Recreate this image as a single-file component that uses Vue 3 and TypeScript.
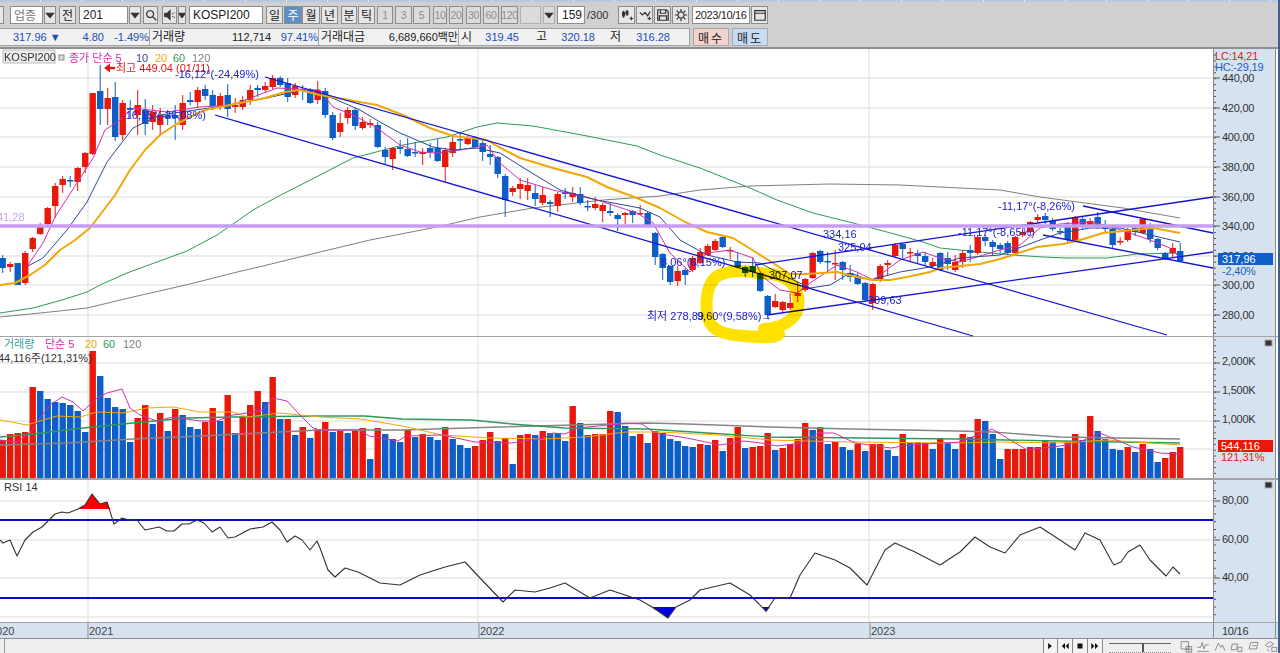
<script setup lang="ts">
type Item = { l: number; r: number; k: string; t?: string; d?: string; fill?: boolean };
const top: Item[] = [
  { l: -2, r: 4, k: 'btn' },
  { l: 10, r: 43, k: 'field muted', t: '업종' },
  { l: 44, r: 56, k: 'btn', d: 'M4 6h8l-4 5z', fill: true },
  { l: 59, r: 76, k: 'btn', t: '전' },
  { l: 79, r: 128, k: 'field', t: '201' },
  { l: 129, r: 141, k: 'btn', d: 'M4 6h8l-4 5z', fill: true },
  { l: 143, r: 158, k: 'btn', d: 'M7 3a4 4 0 1 0 .01 0M10 10l4 4' },
  { l: 162, r: 177, k: 'btn', d: 'M2 6h3l3-3v10l-3-3H2zM11 6v1M11 9v1M13 5v1M13 10v1', fill: true },
  { l: 178, r: 186, k: 'btn', d: 'M4 6h8l-4 5z', fill: true },
  { l: 189, r: 263, k: 'field', t: 'KOSPI200' },
  { l: 266, r: 283, k: 'btn', t: '일' },
  { l: 284, r: 302, k: 'btn on', t: '주' },
  { l: 302, r: 320, k: 'btn', t: '월' },
  { l: 321, r: 338, k: 'btn', t: '년' },
  { l: 341, r: 357, k: 'btn', t: '분' },
  { l: 358, r: 375, k: 'btn', t: '틱' },
  { l: 377, r: 393, k: 'btn dim', t: '1' },
  { l: 395, r: 412, k: 'btn dim', t: '3' },
  { l: 413, r: 430, k: 'btn dim', t: '5' },
  { l: 433, r: 447, k: 'btn dim', t: '10' },
  { l: 449, r: 463, k: 'btn dim', t: '20' },
  { l: 466, r: 481, k: 'btn dim', t: '30' },
  { l: 483, r: 499, k: 'btn dim', t: '60' },
  { l: 501, r: 518, k: 'btn dim', t: '120' },
  { l: 520, r: 541, k: 'btn blank' },
  { l: 543, r: 555, k: 'btn blank', d: 'M4 6h8l-4 5z', fill: true },
  { l: 557, r: 585, k: 'field end', t: '159' },
  { l: 587, r: 612, k: 'plain', t: '/300' },
  { l: 618, r: 635, k: 'btn', d: 'M4 3v8M3 5h2v4H3zM8 2v7M7 4h2v3H7zM11 12h4M13 10v4' },
  { l: 636, r: 653, k: 'btn', d: 'M2 5l3 3 3-3 3 4 3-5M11 12h4M13 10v4' },
  { l: 654, r: 671, k: 'btn', d: 'M2 2h10l2 2v10H2zM5 2v4h6V2M4 9h8v5H4z' },
  { l: 672, r: 689, k: 'btn', d: 'M8 4.5a3.5 3.5 0 1 0 .01 0M8 1v3M8 12v3M1 8h3M12 8h3M3 3l2 2M11 11l2 2M13 3l-2 2M5 11l-2 2' },
  { l: 692, r: 750, k: 'field tight', t: '2023/10/16' },
  { l: 751, r: 768, k: 'btn', d: 'M2 3h12v11H2zM2 6h12' },
];
const widthOf = (it: Item, i: number) => ({
  width: it.r - it.l + 'px',
  marginLeft: (i ? it.l - top[i - 1].r : it.l) + 'px',
});

type Cell = { w: number; t: string; c: string };
const quote: Cell[] = [
  { w: 13, t: '', c: '' },
  { w: 47, t: '317.96 ▼', c: 'up' },
  { w: 44, t: '4.80', c: 'up end' },
  { w: 45, t: '-1.49%', c: 'up end' },
  { w: 41, t: '거래량', c: 'ko sep' },
  { w: 81, t: '112,714', c: 'end' },
  { w: 47, t: '97.41%', c: 'up end' },
  { w: 48, t: '거래대금', c: 'ko sep' },
  { w: 92, t: '6,689,660백만', c: 'end' },
  { w: 15, t: '시', c: 'ko sep' },
  { w: 46, t: '319.45', c: 'up end' },
  { w: 28, t: '고', c: 'ko end' },
  { w: 48, t: '320.18', c: 'up end' },
  { w: 26, t: '저', c: 'ko end' },
  { w: 49, t: '316.28', c: 'up end' },
];

const X = (i: number) => 2.7 + 7.5 * i;

const candleData = `b258,268,255,273 r264,267,262,272 b263,285,263,285 r253,283,251,285 r238,249,237,252 r227,234,223,235 r208,224,207,225 r186,206,183,218 r179,185,176,193 b180,181,176,187 r168,182,167,191 r153,167,152,173 r93,154,93,155
b91,109,65,125 r98,109,88,125 b97,137,82,141 r103,135,100,140 b108,110,100,118 r105,115,90,135 b110,124,99,135 r112,122,105,130 r115,125,108,135 b115,118,110,125 b115,118,105,140 r103,125,95,130 b100,102,92,105 r90,102,87,108 b89,96,85,100 b95,106,90,110 r96,106,93,110 b95,109,84,117 r105,107,98,113 r100,107,96,110 r90,100,85,105 b88,90,85,97 r86,90,82,92 r78,87,75,90 b78,85,76,87 b83,97,78,102 r86,95,83,98 b89,91,85,100 b90,103,88,104 r90,100,81,104 b91,115,88,118
b115,138,112,140 r123,132,113,137 r110,118,107,124 b110,126,108,130 r122,128,117,130 r123,125,119,128 b125,147,122,148 b150,157,147,165 r148,159,147,170 b147,149,140,154 b149,156,138,157 b152,153,142,157 r152,154,148,165 b148,152,143,158 b148,161,139,162 r150,167,148,182 r142,153,135,157 b139,140,132,150 r138,144,136,145 b137,147,136,148 b143,152,140,161 b154,157,145,165 b157,174,156,178 b176,200,174,217 r188,192,186,196 r184,189,178,199 r185,191,178,200 b193,199,185,206 r195,203,187,205 b202,204,200,217 r194,206,192,212 b192,194,188,199 r193,197,187,202 b194,203,187,205 b206,207,200,211 r204,208,197,210 r205,211,203,222 b211,213,203,216 b215,219,213,231 r213,215,212,224 b211,215,210,223 r213,214,205,215 b213,225,212,226
b233,257,232,265 b254,268,253,280 b266,282,265,285 r271,281,266,286 b270,275,268,285 r258,270,256,272 r252,263,248,264 r246,255,244,256 r241,250,239,251 b237,247,236,248 r250,251,247,259 b261,267,252,268 b267,273,266,277 b266,272,257,277 b273,291,272,292 b296,315,295,319 r301,307,294,308 r302,310,301,313 r303,308,293,310 r293,296,282,302 r279,290,278,292 r253,278,252,279 b251,262,250,264 b261,262,252,272 r263,264,250,280 b262,270,261,280 b273,277,265,282 b277,284,273,285 b283,300,282,301 r284,303,283,310 r266,280,264,282 r263,265,260,275 r245,256,243,257 b244,249,243,258 r252,253,248,261 b253,256,250,263 b256,262,252,265 r262,266,258,268 b253,270,252,271
b258,264,252,270 r262,270,255,272 r253,262,250,268 b250,253,245,262 r237,253,235,255 b237,241,235,246 b242,247,240,255 b245,249,243,253 b243,253,241,255 r237,253,236,254 r232,235,230,237 r222,232,221,233 r217,220,214,222 b216,220,213,224 b221,229,218,231 b231,232,228,235 b227,240,222,242 r217,240,216,241 b219,225,217,230 r221,225,218,228 b217,227,212,229 b226,229,220,232 b229,245,228,248 r241,242,237,245 r229,240,228,242 b228,232,226,236 r219,233,218,234 b227,239,223,243 b239,248,238,250 b253,258,252,260 r248,253,243,258 b251,261,243,262`;
const candles = candleData.trim().split(/\s+/).map((s, i) => {
  const [a, b, c, d] = s.slice(1).split(',').map(Number);
  return { x: X(i), red: s[0] === 'r', a, b, c, d };
});

const volData = `r440 r434 r433 r432 r387 b391 b399 b402 b403 b405 b411 b432 r351 b376 b398 b407 b409 b442 r418 r405 b424 r413 b431 r409 b415 b427 b429 r422 r408 b421 r395 b433 r417 r405 r391 b402 r377 b419 r419 b435 r427 b438 r429
r422 b432 r431 b433 r431 r428 b459 r428 b434 b439 b442 r430 b437 r434 b437 b440 r427 b439 b445 b448 r446 r440 r432 b441 r438 b464 r435 r434 b435 r431 b433 b433 b441 r406 b423 b435 r434 r434 r411 b412 b426 b436 r434 b443 r431 b433 b439 b441 b446 b447 r444 b445 r440 b451 r438 r427 b448 r447 r446 r433 b450 r448 r444 r439 r423 b430 r427 b444 r442 b447 b450 r444 b451 r444 r444 b450 b456 r434 b443 r442 r443 b449 r438 b443 b449
r434 b437 r419 b421 b434 b459 r449 r449 r449 r447 r447 r440 b442 b448 r442 r434 b440 r416 b431 b439 b449 b450 r447 b452 r444 b449 b462 r458 r452 r447`;
const bars = volData.trim().split(/\s+/).map((s, i) => ({ x: X(i), red: s[0] === 'r', y: Number(s.slice(1)) }));

const ma = [
  { c: 'm5', p: '28,265 43,243 55,217 77,183 93,158 105,130 120,120 133,108 167,112 200,107 233,105 253,97 277,88 320,90 333,107 353,115 377,128 400,145 420,152 437,153 460,150 487,145 500,163 520,180 553,190 597,200 637,213 653,223 670,253 690,272 707,253 730,250 753,258 763,277 780,290 797,293 810,283 837,265 857,272 873,280 900,260 923,252 940,258 960,262 1000,250 1020,245 1040,228 1060,224 1090,222 1105,225 1130,233 1150,240 1170,248 1180,258' },
  { c: 'm10', p: '28,266 43,258 67,230 87,202 107,162 133,128 160,115 217,107 267,98 302,90 330,97 360,110 380,122 400,133 433,147 453,150 477,148 500,153 527,170 560,190 597,200 640,208 660,217 680,240 707,255 737,262 760,263 783,275 810,288 830,285 850,273 870,280 900,272 930,267 960,258 1000,255 1040,240 1060,233 1090,228 1120,228 1150,235 1180,242' },
  { c: 'm20', p: '0,285 15,283 30,275 45,265 60,250 75,240 90,228 100,215 115,195 130,170 145,150 160,135 175,125 190,117 205,110 220,107 240,103 265,98 285,92 300,90 320,95 377,105 403,115 430,128 453,136 487,140 497,146 520,158 553,168 587,177 607,187 637,198 660,208 687,223 707,232 733,238 757,253 773,263 790,274 807,274 837,272 857,277 873,280 890,280 907,277 930,272 940,268 980,264 1000,259 1013,255 1037,247 1063,244 1080,240 1103,233 1123,231 1153,228 1180,233' },
  { c: 'm60', p: '0,313 33,308 62,300 87,292 100,285 127,273 187,251 217,235 233,224 253,210 277,197 320,175 353,158 403,145 447,137 477,127 497,123 533,126 587,136 637,146 660,155 700,168 750,188 777,200 813,213 853,223 887,232 923,242 940,248 980,252 1013,255 1043,257 1067,258 1107,258 1137,254 1180,253' },
  { c: 'm120', p: '0,317 50,312 87,308 133,297 190,284 233,273 263,266 320,252 370,240 437,227 480,217 533,208 603,200 660,196 700,190 750,186 830,184 900,185 1000,190 1040,197 1123,208 1180,218' },
];
const vma = [
  { c: 'v120', p: '0,445 67,443 133,439 200,436 320,430 402,430 500,427 647,423 687,424 769,427 851,429 957,431 993,432 1060,437 1180,439' },
  { c: 'v60', p: '0,437 33,434 83,428 133,423 187,418 233,417 320,416 365,416 402,419 471,420 512,424 565,428 647,429 708,433 769,437 957,439 1060,441 1180,443' },
  { c: 'v20', p: '0,420 27,425 43,420 57,416 80,417 97,412 123,413 147,408 173,407 200,412 233,412 247,417 280,413 320,417 361,419 402,426 442,435 491,438 544,439 585,437 626,432 659,432 720,435 769,440 851,442 957,443 997,442 1060,443 1107,440 1180,445' },
  { c: 'v5', p: '0,440 17,442 30,433 40,418 50,405 62,397 73,402 83,411 97,398 107,393 122,389 130,408 140,415 157,421 173,417 200,421 217,421 233,415 253,412 263,410 273,398 287,401 300,415 313,428 320,430 359,430 369,436 398,441 406,436 442,435 475,442 512,443 544,438 553,433 565,434 577,428 598,426 626,423 642,424 655,433 687,438 720,445 744,441 761,443 777,446 802,443 818,433 834,433 855,443 891,448 908,445 960,442 992,429 1027,450 1060,446 1077,443 1100,433 1133,447 1160,453 1180,454' },
];
const rsi = '0,540 3,543 10,540 17,556 25,540 33,532 42,527 55,514 62,512 68,513 78,509 85,505 92,494 100,504 107,502 114,524 122,518 129,520 137,520 145,530 159,527 167,531 174,531 182,524 189,524 197,520 204,523 212,532 220,527 228,538 235,537 250,529 263,527 272,522 280,530 287,542 295,536 302,540 310,550 317,541 320,548 328,570 335,577 345,568 358,572 380,583 400,585 420,575 445,567 465,562 480,578 503,602 515,590 535,592 550,588 565,583 590,598 610,590 640,600 652,607 668,618 676,607 690,600 700,590 730,583 750,595 766,611 775,598 790,598 800,575 815,553 835,560 850,568 867,585 885,550 895,543 915,552 940,565 960,552 975,537 990,547 1005,553 1020,535 1040,527 1060,540 1075,550 1085,533 1100,540 1112,562 1114,565 1121,562 1128,552 1140,545 1150,560 1166,576 1173,567 1180,574';

const trends = [
  [265, 77, 1167, 335],
  [215, 115, 973, 336],
  [1083, 206, 1213, 233],
  [1043, 235, 1213, 268],
  [767, 315, 1213, 252],
  [755, 265, 1213, 197],
];
const priceGrid = [78, 108, 137, 167, 197, 226, 256, 285, 315];
const volGrid = [363, 392, 421, 449];
const rsiGrid = [501, 540, 578, 617];
const vlines = [88, 478, 869];

const range = (a: number, b: number, s: number) => {
  const out: number[] = [];
  for (let v = a; v < b; v += s) out.push(v);
  return out;
};
const priceTicks = range(55, 336, 5.92);
const volTicks = range(340, 478, 5.8);
const rsiTicks = range(483, 620, 7.75);
const priceLabels = [
  ['440,00', 78], ['420,00', 108], ['400,00', 137], ['380,00', 167], ['360,00', 197],
  ['340,00', 226], ['320,00', 256], ['300,00', 285], ['280,00', 315],
] as [string, number][];
const volLabels = [['2,000K', 363], ['1,500K', 392], ['1,000K', 421]] as [string, number][];
const rsiLabels = [['80,00', 501], ['60,00', 540], ['40,00', 578]] as [string, number][];

const notes = [
  { x: 175, y: 78, t: '-16,12°(-24,49%)' },
  { x: 122, y: 119, t: '-16,15°(-26,08%)' },
  { x: 661, y: 266, t: '8,06°(6,15%)' },
  { x: 647, y: 320, t: '최저 278,89' },
  { x: 697, y: 320, t: '9,60°(9,58%)→' },
  { x: 823, y: 238, t: '334,16' },
  { x: 838, y: 251, t: '325,04' },
  { x: 868, y: 304, t: '309,63' },
  { x: 958, y: 236, t: '-11,17°(-8,65%)' },
  { x: 998, y: 210, t: '-11,17°(-8,26%)' },
];
const dates = [['2020', -10], ['2021', 89], ['2022', 480], ['2023', 871]] as [string, number][];
const transport = ['M5 3l6 5-6 5z', 'M8 3L3 8l5 5zM14 3L9 8l5 5z', 'M4 4h8v8H4z', 'M2 3l5 5-5 5zM8 3l5 5-5 5z'];
const tools = [
  'M2 2h9v9H2zM8 8h7v7H8zM8 11.5h7M11.5 8v7',
  'M1 9h4l2-6 2 8 2-5h4M1 14h14',
  'M2 13l4-9 3 5 2-3 3 7',
  'M2 5h7l-2 7H1zM9 9h5v5H9z',
  'M4 3h9l-2 8H2zM6 7h5',
  'M1 6l6-4 4 3-6 4zM9 9h6v5H9zM3 11l3 3',
];
</script>

<template>
  <div class="frame">
    <div class="strip"></div>

    <div class="bar row1">
      <div v-for="(it, i) in top" :key="i" :class="['ctl', it.k]" :style="widthOf(it, i)">
        <svg v-if="it.d" class="ico" viewBox="0 0 16 16">
          <path :d="it.d" :class="{ solid: it.fill }" />
        </svg>
        <template v-else>{{ it.t }}</template>
      </div>
    </div>

    <div class="bar row2">
      <div class="quote">
        <span v-for="(c, i) in quote" :key="i" :class="['cell', c.c]" :style="{ width: c.w + 'px' }">{{ c.t }}</span>
      </div>
      <button class="order buy">매수</button>
      <button class="order sell">매도</button>
    </div>

    <div class="panel p1">
      <svg class="plot price" viewBox="0 49 1213 287" width="1213" height="287">
        <line v-for="y in priceGrid" :key="y" class="grid" x1="0" x2="1213" :y1="y" :y2="y" />
        <line v-for="x in vlines" :key="x" class="grid" :x1="x" :x2="x" y1="49" y2="336" />
        <polyline v-for="m in ma.slice(3)" :key="m.c" :class="['ma', m.c]" :points="m.p" />
        <g v-for="(c, i) in candles" :key="i" :class="c.red ? 'r' : 'b'">
          <line class="wick" :x1="c.x" :x2="c.x" :y1="c.c" :y2="c.d" />
          <rect class="body" :x="c.x - 3.2" :y="c.a" width="6.4" :height="Math.max(c.b - c.a, 1.5)" />
        </g>
        <polyline v-for="m in ma.slice(0, 3)" :key="m.c" :class="['ma', m.c]" :points="m.p" />
        <line v-for="(t, i) in trends" :key="i" class="trend" :x1="t[0]" :y1="t[1]" :x2="t[2]" :y2="t[3]" />
        <line class="level" x1="0" x2="1213" y1="226" y2="226" />
        <text class="lvltext" x="-3" y="221">41,28</text>
        <rect class="tagbox" x="3" y="50" width="52" height="13" />
        <text class="dark2" x="4" y="61">KOSPI200</text>
        <rect class="tagmark" x="59" y="55" width="5" height="5" />
        <text class="legend"><tspan class="mag" x="69" y="62">종가 단순 5</tspan><tspan class="navy" x="136" y="62">10</tspan><tspan class="ora" x="155" y="62">20</tspan><tspan class="gre" x="173" y="62">60</tspan><tspan class="gra" x="192" y="62">120</tspan></text>
        <path class="hi-arrow" d="M104 68l6-4.500v3.300h5v2.400h-5v3.300z" />
        <text class="hi" x="116" y="72">최고 449.04 (01/11)</text>
        <text v-for="n in notes" :key="n.x" class="note" :x="n.x" :y="n.y">{{ n.t }}</text>
        <text class="dark" x="769" y="279">307,07</text>
        <path class="marker" d="M758 273C745 270 727 270 716 277C706 285 705 305 708 318C711 331 725 335 745 336C760 337 776 339 779 334C778 331 770 330 764 329C782 328 795 320 798 308C800 296 796 286 788 280C779 274 770 274 758 273Z" />
      </svg>
      <svg class="axis" viewBox="1214 49 61 287" width="61" height="287">
        <line v-for="y in priceTicks" :key="y" class="tick" x1="1214" x2="1216" :y1="y" :y2="y" />
        <g v-for="l in priceLabels" :key="l[1]">
          <line class="tick" x1="1214" x2="1220" :y1="l[1]" :y2="l[1]" />
          <text class="lab" x="1222" :y="l[1] + 4">{{ l[0] }}</text>
        </g>
        <text class="lc" x="1215" y="60">LC:14,21</text>
        <text class="hc" x="1215" y="71">HC:-29,19</text>
        <rect class="badge-b" x="1218" y="253" width="55" height="12" />
        <text class="badge-t" x="1222" y="263">317,96</text>
        <text class="hc" x="1222" y="275">-2,40%</text>
      </svg>
    </div>

    <div class="panel p2">
      <svg class="plot" viewBox="0 337 1213 141" width="1213" height="141">
        <line v-for="y in volGrid" :key="y" class="grid" x1="0" x2="1213" :y1="y" :y2="y" />
        <line v-for="x in vlines" :key="x" class="grid" :x1="x" :x2="x" y1="337" y2="478" />
        <rect v-for="(b, i) in bars" :key="i" :class="b.red ? 'vr' : 'vb'" :x="b.x - 3.2" :y="b.y" width="6.4" :height="478 - b.y" />
        <polyline v-for="m in vma" :key="m.c" :class="['ma', m.c]" :points="m.p" />
        <text class="legend"><tspan class="teal" x="4" y="348">거래량</tspan><tspan class="mag" x="45" y="348">단순 5</tspan><tspan class="ora" x="85" y="348">20</tspan><tspan class="gre" x="103" y="348">60</tspan><tspan class="gra" x="123" y="348">120</tspan></text>
        <text class="dark2" x="-2" y="362">44,116주(121,31%)</text>
      </svg>
      <svg class="axis" viewBox="1214 337 61 141" width="61" height="141">
        <line v-for="y in volTicks" :key="y" class="tick" x1="1214" x2="1216" :y1="y" :y2="y" />
        <g v-for="l in volLabels" :key="l[1]">
          <line class="tick" x1="1214" x2="1220" :y1="l[1]" :y2="l[1]" />
          <text class="lab" x="1222" :y="l[1] + 2">{{ l[0] }}</text>
        </g>
        <rect class="mini" x="1265" y="340" width="7" height="6" />
        <rect class="badge-r" x="1218" y="440" width="55" height="12" />
        <text class="badge-t" x="1221" y="450">544,116</text>
        <text class="redt" x="1221" y="461">121,31%</text>
      </svg>
    </div>

    <div class="panel p3">
      <svg class="plot" viewBox="0 480 1213 142" width="1213" height="142">
        <line v-for="y in rsiGrid" :key="y" class="grid" x1="0" x2="1213" :y1="y" :y2="y" />
        <line v-for="x in vlines" :key="x" class="grid" :x1="x" :x2="x" y1="480" y2="622" />
        <polygon class="over" points="78,509 85,505 92,494 100,504 107,502 110,509" />
        <polygon class="under" points="652,607 676,607 668,618" />
        <polygon class="under" points="762,607 770,607 766,612" />
        <line class="bound" x1="0" x2="1213" y1="520" y2="520" />
        <line class="bound" x1="0" x2="1213" y1="598" y2="598" />
        <polyline class="rsi" :points="rsi" />
        <text class="dark2" x="4" y="491">RSI 14</text>
      </svg>
      <svg class="axis" viewBox="1214 480 61 142" width="61" height="142">
        <line v-for="y in rsiTicks" :key="y" class="tick" x1="1214" x2="1216" :y1="y" :y2="y" />
        <g v-for="l in rsiLabels" :key="l[1]">
          <line class="tick" x1="1214" x2="1220" :y1="l[1]" :y2="l[1]" />
          <text class="lab" x="1222" :y="l[1] + 3">{{ l[0] }}</text>
        </g>
        <rect class="mini" x="1265" y="482" width="7" height="6" />
      </svg>
    </div>

    <div class="panel dates">
      <svg class="plot" viewBox="0 623 1213 15" width="1213" height="15">
        <g v-for="d in dates" :key="d[0]">
          <line class="dtick" :x1="d[1] - 1" :x2="d[1] - 1" y1="623" y2="638" />
          <text class="dlab" :x="d[1]" y="635">{{ d[0] }}</text>
        </g>
      </svg>
      <svg class="axis" viewBox="1214 623 61 15" width="61" height="15">
        <text class="lab" x="1222" y="635">10/16</text>
      </svg>
    </div>

    <div class="foot">
      <div class="foot-start"></div>
      <div class="transport">
        <button v-for="(d, i) in transport" :key="i" class="tbtn">
          <svg viewBox="0 0 16 16"><path :d="d" /></svg>
        </button>
      </div>
      <div class="slider"><div class="rail"></div><div class="knob"></div></div>
      <div class="tools">
        <svg v-for="(d, i) in tools" :key="i" viewBox="0 0 16 16"><path :d="d" /></svg>
      </div>
    </div>
  </div>
</template>

<style>
html, body { margin: 0; background: #fff; overflow: hidden; }
</style>

<style scoped>
.frame {
  width: 1280px;
  height: 653px;
  box-sizing: border-box;
  border-right: 2px solid #3f5f8f;
  overflow: hidden;
  display: flex;
  flex-direction: column;
  font-family: "Liberation Sans", "Noto Sans CJK KR", sans-serif;
  font-size: 11px;
  color: #222;
  background: #fff;
}
.strip {
  height: 2px;
  flex: none;
  background: repeating-linear-gradient(90deg, #b6c8e0 0 40px, #dbe4f0 40px 41px);
}
.bar { flex: none; background: #d0d0d0; display: flex; align-items: center; }
.row1 { height: 25px; }
.row2 { height: 20px; border-bottom: 1px solid #8f8f8f; box-sizing: content-box; }
.ctl {
  height: 18px;
  box-sizing: border-box;
  flex: none;
  border: 1px solid #8c8c8c;
  display: flex;
  align-items: center;
  justify-content: center;
  background: #e6e6e6;
  white-space: nowrap;
  font-size: 12px;
  overflow: hidden;
}
.field { background: #fff; justify-content: flex-start; padding-left: 3px; }
.field.muted { color: #777; }
.field.end { justify-content: flex-end; padding-right: 2px; }
.field.tight { font-size: 11px; letter-spacing: -0.35px; padding-left: 2px; }
.on { background: #5b90c8; color: #fff; }
.dim { color: #8c8c8c; font-size: 10.5px; letter-spacing: -0.4px; background: #dcdcdc; }
.blank { background: #dcdcdc; color: #9a9a9a; border-color: #b0b0b0; }
.plain { background: none; border: none; justify-content: flex-start; color: #333; font-size: 11px; }
.ico { width: 14px; height: 14px; flex: none; }
.ico path { fill: none; stroke: #333; stroke-width: 1.4; }
.ico path.solid { fill: #333; }
.quote {
  width: 690px;
  height: 18px;
  box-sizing: border-box;
  background: #f1f1f1;
  border: 1px solid #a0a0a0;
  border-left: none;
  display: flex;
  align-items: center;
  flex: none;
}
.cell { flex: none; white-space: nowrap; display: block; box-sizing: border-box; line-height: 16px; }
.up { color: #1a4fb4; }
.end { text-align: right; }
.ko { font-size: 12px; color: #222; }
.sep { border-left: 1px solid #a8a8a8; padding-left: 2px; }
.order {
  width: 36px;
  height: 18px;
  padding: 0;
  margin-left: 3px;
  border: 1px solid #a8a8a8;
  font: 12px "Liberation Sans", "Noto Sans CJK KR", sans-serif;
  letter-spacing: 2px;
  color: #222;
}
.buy { background: #f6d2cc; }
.sell { background: #c4dcf4; }

.panel { display: flex; flex: none; border-bottom: 1px solid #a4a4a4; }
.p1 { border-top: 1px solid #8f8f8f; }
.p2 { border-bottom-width: 2px; }
.plot { display: block; flex: none; background: #fff; overflow: hidden; }
.price { overflow: visible; position: relative; z-index: 2; }
.axis { display: block; flex: none; background: #d6e2f0; border-left: 1px solid #8a8a8a; border-right: 1px solid #8a8a8a; overflow: hidden; }
.dates { background: #d6e2f0; border-bottom: 1px solid #8f8f8f; }
.dates .plot { background: #d6e2f0; }

.grid { stroke: #e7e7e7; stroke-width: 1.4; }
.wick { stroke-width: 1; }
.r .wick { stroke: #e8190a; }
.b .wick { stroke: #0d5ec8; }
.r .body { fill: #e8190a; }
.b .body { fill: #0d5ec8; }
.vr { fill: #e8190a; }
.vb { fill: #0d5ec8; }
.ma { fill: none; stroke-linejoin: round; }
.m5 { stroke: #d030b0; stroke-width: 1; }
.m10 { stroke: #2a4a9c; stroke-width: 1; }
.m20 { stroke: #f0a808; stroke-width: 2; }
.m60 { stroke: #2f9a58; stroke-width: 1; }
.m120 { stroke: #808080; stroke-width: 1; }
.v5 { stroke: #d030b0; stroke-width: 1; }
.v20 { stroke: #f0a808; stroke-width: 1; }
.v60 { stroke: #2f9a58; stroke-width: 1.4; }
.v120 { stroke: #858585; stroke-width: 1.4; }
.trend { stroke: #1515d8; stroke-width: 1.3; }
.level { stroke: #c89cf4; stroke-width: 3.4; }
.lvltext { fill: #c8a4f0; font-size: 11px; }
.hi { fill: #e01818; font-size: 11px; }
.hi-arrow { fill: #e01818; }
.note { fill: #2020d0; font-size: 11px; }
.dark { fill: #15156a; font-size: 11px; }
.dark2 { fill: #333; font-size: 11px; }
.tagbox { fill: #ececec; stroke: #bdbdbd; stroke-width: 1; }
.tagmark { fill: #d8d8e4; stroke: #8a8a8a; stroke-width: 1; }
.marker { fill: none; stroke: #ffe100; stroke-width: 12; mix-blend-mode: multiply; stroke-linejoin: round; }

.tick { stroke: #555; stroke-width: 1; }
.lab { fill: #333; font-size: 11px; letter-spacing: -0.25px; }
.lc { fill: #e01818; font-size: 11px; letter-spacing: -0.2px; }
.hc { fill: #1a5ec8; font-size: 11px; letter-spacing: -0.2px; }
.badge-b { fill: #1060c8; }
.badge-r { fill: #e8190a; }
.badge-t { fill: #fff; font-size: 11px; }
.redt { fill: #e01818; font-size: 11px; }
.mini { fill: #333; stroke: #aaa; stroke-width: 1; }

.legend { font-size: 11px; }
.teal { fill: #3aa0a0; }
.mag { fill: #d030b0; }
.navy { fill: #2a4a9c; }
.ora { fill: #f0a808; }
.gre { fill: #2f9a58; }
.gra { fill: #808080; }

.over { fill: #fa0000; }
.under { fill: #0000e0; }
.bound { stroke: #0a0ad0; stroke-width: 2; }
.rsi { fill: none; stroke: #333; stroke-width: 1.1; stroke-linejoin: round; }

.dtick { stroke: #8a8a8a; stroke-width: 1; }
.dlab { fill: #444; font-size: 11px; }

.foot { height: 14px; flex: 1; display: flex; align-items: center; background: #efefef; }
.foot-start { width: 1px; height: 14px; background: #9a9a9a; margin-left: 4px; }
.transport { display: flex; margin-left: 1038px; height: 14px; border-left: 1px solid #8a8a8a; gap: 1px; }
.tbtn { width: 14px; height: 14px; padding: 0; border: none; border-right: 1px solid #8a8a8a; background: #f3f3f3; }
.tbtn svg { width: 10px; height: 10px; display: block; margin: 2px auto; }
.tbtn path { fill: #111; }
.slider { position: relative; width: 63px; height: 14px; margin-left: 6px; border-bottom: 1px dotted #888; box-sizing: border-box; }
.rail { position: absolute; left: 0; right: 0; top: 4px; height: 1px; background: #666; }
.knob { position: absolute; left: 33px; top: 4px; width: 2px; height: 9px; background: #555; }
.tools { display: flex; gap: 3px; margin-left: 8px; }
.tools svg { width: 14px; height: 13px; }
.tools path { fill: none; stroke: #777; stroke-width: 1; }
</style>
